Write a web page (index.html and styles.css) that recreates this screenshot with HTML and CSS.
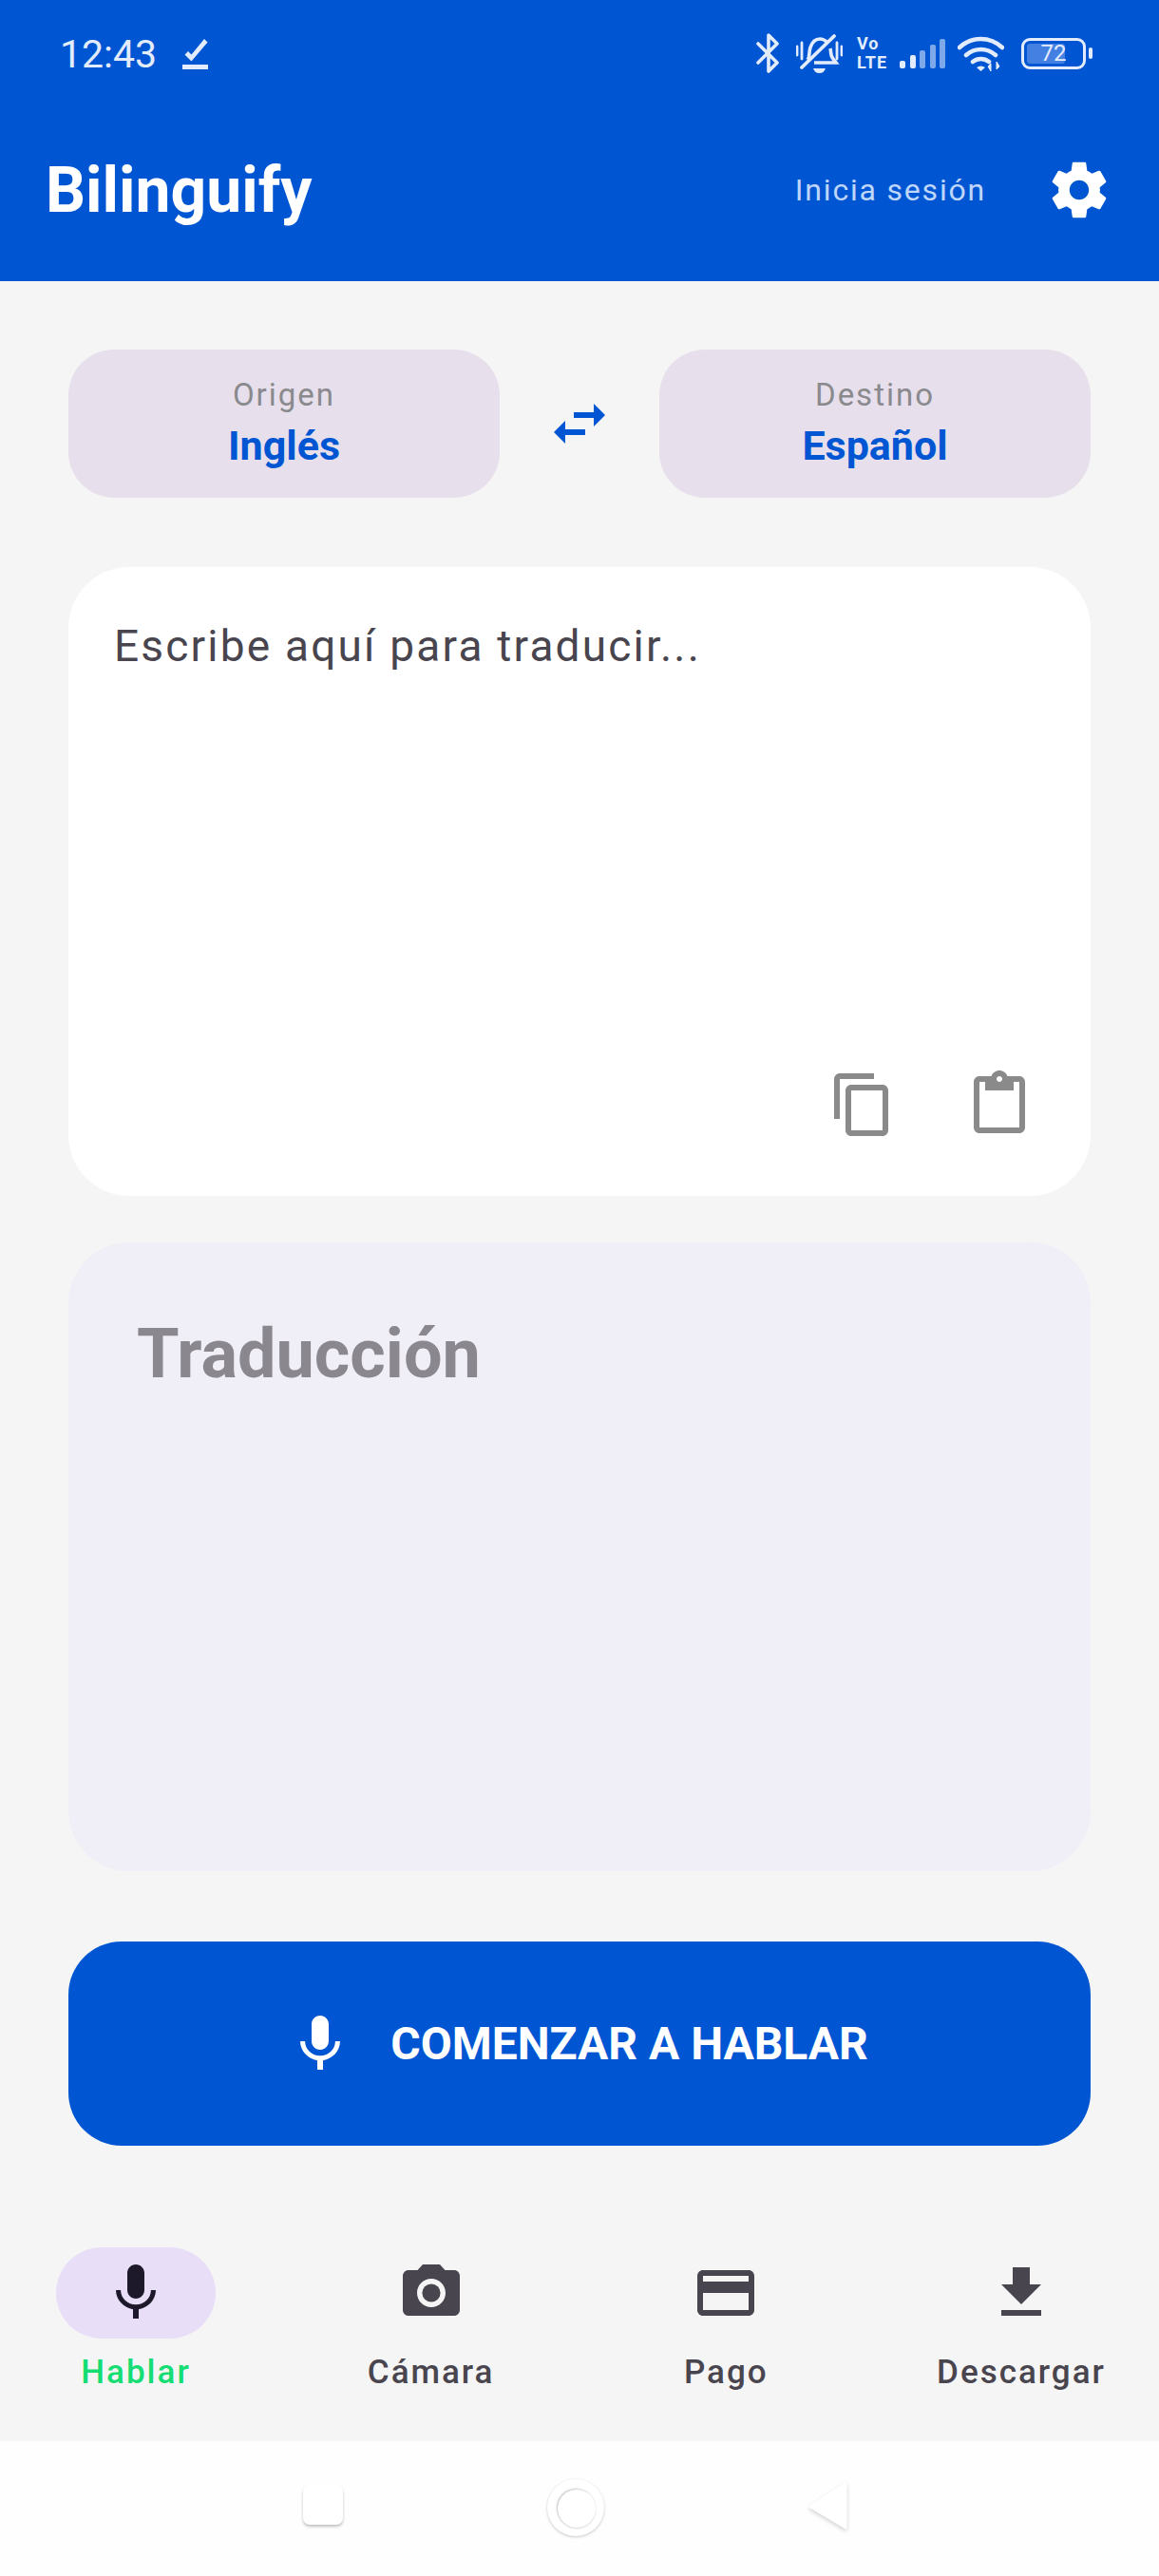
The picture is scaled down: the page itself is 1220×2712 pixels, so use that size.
FILE: index.html
```html
<!DOCTYPE html>
<html lang="es">
<head>
    <meta charset="UTF-8">
    <meta name="viewport" content="width=device-width, initial-scale=1.0">
    <title>Bilinguify</title>
    <link rel="stylesheet" href="styles.css">
</head>
<body>
    <header class="top">
        <div class="status-bar">
            <div class="status-left">
                <span class="time">12:43</span>
                <svg class="tick" viewBox="0 0 27 32"><path d="M0 27h27v5H0zM9.500 23.500 2.500 16.500l3.500-3.500 3.500 3.500L23 0l3.500 3.500z" fill="currentColor"/></svg>
            </div>
            <div class="status-right">
                <svg class="st-bt" viewBox="0 0 26 42"><path d="M2 11l20 20-9 9V2l9 9L2 31" fill="none" stroke="currentColor" stroke-width="3.600" stroke-linecap="round" stroke-linejoin="round"/></svg>
                <svg class="st-bell" viewBox="0 0 49 41"><path d="M12 27c3-3 1-8 3-13 2-6 6-9 10-9 3 0 5 1 7 3M36 15c1 4 0 8 3 11l3 4H19" fill="none" stroke="currentColor" stroke-width="3.600"/><path d="M6 35 40 2" stroke="currentColor" stroke-width="3.800" stroke-linecap="round"/><path d="M1 13v9M6 9v17M43 9v17M48 13v9" stroke="currentColor" stroke-width="2.800" stroke-linecap="round"/><path d="M18 36h13c-1 3-3 5-6.500 5S19 39 18 36z" fill="currentColor"/></svg>
                <div class="st-volte"><span>Vo</span><span>LTE</span></div>
                <svg class="st-signal" viewBox="0 0 48 31"><rect x="0" y="23" width="6" height="8" rx="2" fill="currentColor"/><rect x="11" y="17" width="6" height="14" rx="2" fill="currentColor"/><rect x="21" y="12" width="6" height="19" rx="2" fill="currentColor" opacity=".55"/><rect x="32" y="6" width="6" height="25" rx="2" fill="currentColor" opacity=".55"/><rect x="42" y="0" width="6" height="31" rx="2" fill="currentColor" opacity=".55"/></svg>
                <svg class="st-wifi" viewBox="0 0 49 37"><path d="M2 12c13-12 32-12 45 0M9 20c9-8 22-8 31 0M16 27c5-4 12-4 17 0" fill="none" stroke="currentColor" stroke-width="4.500" stroke-linecap="round"/><path d="M20 33c3-2 6-2 9 0l-4.500 4z" fill="currentColor"/><path d="M35 37v-8l-3 3zM41 27v8l3-3z" fill="currentColor" stroke="currentColor"/></svg>
                <div class="battery">
                    <div class="battery-body">
                        <div class="battery-fill" style="width: 72%"></div>
                        <span class="battery-num">72</span>
                    </div>
                    <div class="battery-nub"></div>
                </div>
            </div>
        </div>
        <div class="app-bar">
            <div class="app-title">Bilinguify</div>
            <div class="app-actions">
                <span class="login">Inicia sesión</span>
                <svg class="icon gear" viewBox="0 0 24 24"><path d="M19.430 12.980c.04-.32.07-.64.07-.98s-.03-.66-.07-.98l2.110-1.650c.19-.15.24-.42.12-.64l-2-3.460c-.12-.22-.39-.3-.61-.22l-2.490 1c-.52-.4-1.080-.73-1.690-.98l-.38-2.650C14.460 2.180 14.250 2 14 2h-4c-.25 0-.46.18-.49.42l-.38 2.650c-.61.25-1.170.59-1.690.98l-2.490-1c-.23-.09-.49 0-.61.22l-2 3.460c-.13.22-.07.49.12.64l2.110 1.650c-.04.32-.07.65-.07.98s.03.66.07.98l-2.110 1.650c-.19.15-.24.42-.12.64l2 3.460c.12.22.39.3.61.22l2.490-1c.52.4 1.080.73 1.690.98l.38 2.650c.03.24.24.42.49.42h4c.25 0 .46-.18.49-.42l.38-2.650c.61-.25 1.170-.59 1.690-.98l2.490 1c.23.09.49 0 .61-.22l2-3.460c.12-.22.07-.49-.12-.64l-2.110-1.650zM12 15.500c-1.930 0-3.500-1.570-3.500-3.500s1.570-3.500 3.500-3.500 3.500 1.570 3.500 3.500-1.570 3.500-3.500 3.500z" fill="currentColor"/></svg>
            </div>
        </div>
    </header>

    <main class="content">
        <div class="lang-row">
            <div class="lang-pill">
                <span class="lang-label">Origen</span>
                <span class="lang-name">Inglés</span>
            </div>
            <svg class="icon swap" viewBox="0 0 24 24"><path d="M6.990 11L3 15l3.990 4v-3H14v-2H6.990v-3zM21 9l-3.990-4v3H10v2h7.010v3L21 9z" fill="currentColor"/></svg>
            <div class="lang-pill">
                <span class="lang-label">Destino</span>
                <span class="lang-name">Español</span>
            </div>
        </div>

        <div class="input-card">
            <div class="placeholder">Escribe aquí para traducir...</div>
            <div class="input-tools">
                <svg class="icon" viewBox="0 0 24 24"><path d="M16 1H4c-1.100 0-2 .9-2 2v14h2V3h12V1zm3 4H8c-1.100 0-2 .9-2 2v14c0 1.100.9 2 2 2h11c1.100 0 2-.9 2-2V7c0-1.100-.9-2-2-2zm0 16H8V7h11v14z" fill="currentColor"/></svg>
                <svg class="icon" viewBox="0 0 24 24"><path d="M19 2h-4.180C14.400.84 13.300 0 12 0c-1.300 0-2.400.84-2.820 2H5c-1.100 0-2 .9-2 2v16c0 1.100.9 2 2 2h14c1.100 0 2-.9 2-2V4c0-1.100-.9-2-2-2zm-7 0c.55 0 1 .45 1 1s-.45 1-1 1-1-.45-1-1 .45-1 1-1zm7 18H5V4h2v3h10V4h2v16z" fill="currentColor"/></svg>
            </div>
        </div>

        <div class="result-card">Traducción</div>

        <div class="talk-button">
            <svg class="icon" viewBox="0 0 24 24"><path d="M12 14c1.660 0 2.990-1.340 2.990-3L15 5c0-1.660-1.340-3-3-3S9 3.340 9 5v6c0 1.660 1.340 3 3 3zm5.300-3c0 3-2.540 5.100-5.300 5.100S6.700 14 6.700 11H5c0 3.410 2.720 6.230 6 6.720V21h2v-3.280c3.280-.48 6-3.300 6-6.720h-1.700z" fill="currentColor"/></svg>
            <span>COMENZAR A HABLAR</span>
        </div>
    </main>

    <nav class="tabs">
        <div class="tab active">
            <div class="tab-icon">
                <svg class="icon" viewBox="0 0 24 24"><path d="M12 14c1.660 0 2.990-1.340 2.990-3L15 5c0-1.660-1.340-3-3-3S9 3.340 9 5v6c0 1.660 1.340 3 3 3zm5.300-3c0 3-2.540 5.100-5.300 5.100S6.700 14 6.700 11H5c0 3.410 2.720 6.230 6 6.720V21h2v-3.280c3.280-.48 6-3.300 6-6.720h-1.700z" fill="currentColor"/></svg>
            </div>
            <span class="tab-label">Hablar</span>
        </div>
        <div class="tab">
            <div class="tab-icon">
                <svg class="icon" viewBox="0 0 24 24"><circle cx="12" cy="12" r="3.200" fill="currentColor"/><path d="M9 2L7.170 4H4c-1.100 0-2 .9-2 2v12c0 1.100.9 2 2 2h16c1.100 0 2-.9 2-2V6c0-1.100-.9-2-2-2h-3.170L15 2H9zm3 15c-2.760 0-5-2.240-5-5s2.240-5 5-5 5 2.240 5 5-2.240 5-5 5z" fill="currentColor"/></svg>
            </div>
            <span class="tab-label">Cámara</span>
        </div>
        <div class="tab">
            <div class="tab-icon">
                <svg class="icon" viewBox="0 0 24 24"><path d="M20 4H4c-1.110 0-1.990.89-1.990 2L2 18c0 1.110.89 2 2 2h16c1.110 0 2-.89 2-2V6c0-1.110-.89-2-2-2zm0 14H4v-6h16v6zm0-10H4V6h16v2z" fill="currentColor"/></svg>
            </div>
            <span class="tab-label">Pago</span>
        </div>
        <div class="tab">
            <div class="tab-icon">
                <svg class="icon" viewBox="0 0 24 24"><path d="M19 9h-4V3H9v6H5l7 7 7-7zM5 18v2h14v-2H5z" fill="currentColor"/></svg>
            </div>
            <span class="tab-label">Descargar</span>
        </div>
    </nav>

    <footer class="sys-nav">
        <div class="sys-square"></div>
        <div class="sys-circle"><div class="sys-circle-inner"></div></div>
        <svg class="sys-back" viewBox="0 0 42 50"><path d="M39 2 2 26l37 22z" fill="#fff" stroke="#fff" stroke-width="3" stroke-linejoin="round"/></svg>
    </footer>
</body>
</html>
```

FILE: styles.css
```css
* {
    box-sizing: border-box;
}
body {
    font-family: Roboto, "Liberation Sans", sans-serif;
    margin: 0;
    width: 1220px;
    height: 2712px;
    overflow: hidden;
    background-color: #f5f5f5;
    color: #49454f;
    display: flex;
    flex-direction: column;
}
.icon {
    display: block;
    width: 72px;
    height: 72px;
    flex: none;
}

/* top */
.top {
    height: 296px;
    background-color: #0056d2;
    color: #fff;
}
.status-bar {
    height: 112px;
    padding: 0 70px 0 63px;
    display: flex;
    justify-content: space-between;
    align-items: center;
    color: #e3ecfd;
}
.status-left {
    display: flex;
    align-items: center;
    gap: 27px;
    margin-top: 2px;
}
.time {
    font-size: 41px;
}
.tick {
    width: 27px;
    height: 32px;
}
.status-right {
    display: flex;
    align-items: center;
}
.st-bt {
    width: 26px;
    height: 42px;
}
.st-bell {
    width: 49px;
    height: 41px;
    margin-left: 16px;
}
.st-volte {
    width: 34px;
    margin-left: 15px;
    display: flex;
    flex-direction: column;
    font-size: 18px;
    font-weight: 700;
    line-height: 20px;
    letter-spacing: 1px;
    white-space: nowrap;
}
.st-signal {
    width: 48px;
    height: 31px;
    margin-left: 11px;
}
.st-wifi {
    width: 49px;
    height: 37px;
    margin-left: 13px;
}
.battery {
    display: flex;
    align-items: center;
    margin-left: 18px;
    gap: 3px;
}
.battery-body {
    width: 68px;
    height: 33px;
    border: 3px solid #e3ecfd;
    border-radius: 9px;
    padding: 3px;
    position: relative;
}
.battery-fill {
    height: 100%;
    background-color: #4380e2;
    border-radius: 3px;
}
.battery-num {
    position: absolute;
    top: 0;
    left: 0;
    right: 0;
    bottom: 0;
    text-align: center;
    font-size: 24px;
    line-height: 27px;
}
.battery-nub {
    width: 4px;
    height: 12px;
    border-radius: 2px;
    background-color: #e3ecfd;
}
.app-bar {
    height: 176px;
    padding: 0 49px 0 48px;
    display: flex;
    justify-content: space-between;
    align-items: center;
}
.app-title {
    font-size: 66px;
    font-weight: 700;
}
.app-actions {
    display: flex;
    align-items: center;
    gap: 63px;
}
.login {
    font-size: 32px;
    letter-spacing: 1.800px;
    color: #bfd6fb;
}
.gear {
    width: 70px;
    height: 70px;
}

/* main */
.content {
    padding: 72px 72px 0;
    flex: 1;
}
.lang-row {
    display: flex;
    justify-content: space-between;
    align-items: center;
}
.lang-pill {
    width: 454px;
    height: 156px;
    border-radius: 48px;
    background-color: #e7e0ec;
    display: flex;
    flex-direction: column;
    align-items: center;
    justify-content: center;
    gap: 9px;
    padding-bottom: 3px;
}
.lang-label {
    font-size: 33px;
    letter-spacing: 2px;
    color: #8a8a8e;
}
.lang-name {
    font-size: 43px;
    font-weight: 700;
    color: #0056d2;
}
.swap {
    color: #0056d2;
}
.input-card {
    height: 662px;
    margin-top: 73px;
    padding: 56px 60px 60px 48px;
    background-color: #fff;
    border-radius: 64px;
    display: flex;
    flex-direction: column;
    justify-content: space-between;
}
.placeholder {
    font-size: 46px;
    letter-spacing: 2.200px;
}
.input-tools {
    display: flex;
    justify-content: flex-end;
    gap: 72px;
    color: #8a8a8a;
}
.result-card {
    height: 662px;
    margin-top: 49px;
    padding: 75px 72px;
    background-color: #f0eef6;
    border-radius: 64px;
    font-size: 72px;
    font-weight: 700;
    color: #8a888e;
}
.talk-button {
    height: 215px;
    margin-top: 74px;
    padding-right: 5px;
    background-color: #0056d2;
    color: #fff;
    border-radius: 56px;
    display: flex;
    align-items: center;
    justify-content: center;
    gap: 38px;
    font-size: 48px;
    font-weight: 700;
}

/* bottom tabs */
.tabs {
    height: 204px;
    padding: 0 61px 0 59px;
    display: flex;
    justify-content: space-between;
}
.tab {
    width: 168px;
    display: flex;
    flex-direction: column;
    align-items: center;
}
.tab-icon {
    width: 168px;
    height: 96px;
    border-radius: 48px;
    display: flex;
    align-items: center;
    justify-content: center;
}
.tab-label {
    margin-top: 15px;
    font-size: 35px;
    font-weight: 500;
    letter-spacing: 2px;
    white-space: nowrap;
}
.tab.active .tab-icon {
    background-color: #e8def8;
    color: #1d192b;
}
.tab.active .tab-label {
    color: #14dd73;
}

/* android nav */
.sys-nav {
    height: 142px;
    background-color: #fefefe;
    position: relative;
}
.sys-square {
    position: absolute;
    left: 319px;
    top: 46px;
    width: 42px;
    height: 42px;
    border-radius: 7px;
    background-color: #fff;
    box-shadow: 0 2px 3px rgba(0, 0, 0, 0.25);
}
.sys-circle {
    position: absolute;
    left: 576px;
    top: 40px;
    width: 60px;
    height: 60px;
    border-radius: 50%;
    background-color: #fff;
    box-shadow: 0 1px 3px rgba(0, 0, 0, 0.22);
    padding: 11px 9px 9px 11px;
}
.sys-circle-inner {
    width: 40px;
    height: 40px;
    border-radius: 50%;
    background-color: #fff;
    box-shadow: -1px -1px 2px rgba(0, 0, 0, 0.2), 0 1px 2px rgba(0, 0, 0, 0.15);
}
.sys-back {
    position: absolute;
    left: 851px;
    top: 43px;
    width: 42px;
    height: 50px;
    filter: drop-shadow(0 2px 2px rgba(0, 0, 0, 0.18));
}
```
